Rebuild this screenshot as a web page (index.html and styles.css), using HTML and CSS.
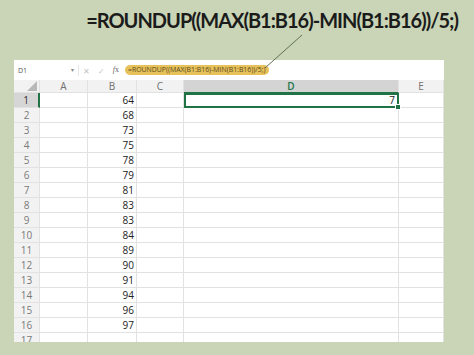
FILE: index.html
```html
<!DOCTYPE html>
<html lang="en">
<head>
    <meta charset="UTF-8">
    <meta name="viewport" content="width=device-width, initial-scale=1.0">
    <title>ROUNDUP</title>
    <link rel="stylesheet" href="styles.css">
</head>
<body>
    <h1 class="headline">=ROUNDUP((MAX(B1:B16)-MIN(B1:B16))/5;)</h1>

    <div class="sheet">
        <div class="fbar">
            <div class="namebox"><span>D1</span><span class="caret">&#9662;</span></div>
            <div class="fbtns">
                <span>&#10005;</span>
                <span>&#10003;</span>
                <span class="fx"><i>f</i>x</span>
            </div>
            <div class="formula"><span class="pill">=ROUNDUP((MAX(B1:B16)-MIN(B1:B16))/5;)</span></div>
        </div>

        <div class="grid" id="grid">
            <div class="corner"><span class="tri"></span></div>
            <div class="colhead">A</div>
            <div class="colhead">B</div>
            <div class="colhead">C</div>
            <div class="colhead active">D</div>
            <div class="colhead">E</div>
        </div>
    </div>

    <!-- leader line from the headline down to the formula -->
    <svg class="leader" width="474" height="355" viewBox="0 0 474 355">
        <line x1="302" y1="35" x2="265" y2="68" stroke="#5f6f55" stroke-width="1"/>
    </svg>

    <script>
        var grid=document.getElementById('grid');
        var values=[64,68,73,75,78,79,81,83,83,84,89,90,91,94,96,97,''];

        for(var r=0;r<values.length;r++){
            var row=r+1;
            var cells=[
                ['rowhead'+(row==1?' active':''), row],
                ['cell',''],
                ['cell num', values[r]],
                ['cell',''],
                ['cell num'+(row==1?' selected':''), row==1?7:''],
                ['cell','']
            ];
            for(var c=0;c<cells.length;c++){
                var d=document.createElement('div');
                d.className=cells[c][0];
                d.textContent=cells[c][1];
                grid.appendChild(d);
            }
        }
    </script>
</body>
</html>
```

FILE: styles.css
```css
*{
    margin: 0;
    padding: 0;
    box-sizing: border-box;
}
body{
    width: 474px;
    height: 355px;
    background: #c9d5b6;
    font-family: "Open Sans", "Noto Sans", sans-serif;
    overflow: hidden;
    position: relative;
}
.headline{
    height: 60px;
    padding: 8px 16px 0 0;
    text-align: right;
    font-family: "Lato", "Liberation Sans", sans-serif;
    font-weight: 700;
    font-size: 20px;
    letter-spacing: -1px;
    color: #1b1b1b;
}
.sheet{
    margin-left: 14px;
    width: 430px;
    height: 282px;
    background: #ffffff;
    overflow: hidden;
}
/* formula bar */
.fbar{
    height: 20px;
    display: flex;
    align-items: center;
    font-size: 7px;
    color: #555555;
}
.namebox{
    width: 64px;
    padding: 0 4px;
    display: flex;
    justify-content: space-between;
}
.caret{
    color: #888888;
    font-size: 6px;
}
.fbtns{
    width: 45px;
    display: flex;
    justify-content: space-around;
    color: #c4c4c4;
    font-size: 8px;
    border-left: 1px solid #e6e6e6;
}
.fbtns .fx{
    color: #666666;
    font-family: "Liberation Serif", serif;
}
.formula{
    flex: 1;
    padding-left: 2px;
}
.pill{
    display: inline-block;
    height: 10px;
    line-height: 10px;
    padding: 0 3px;
    border-radius: 5px;
    background: #e7c15a;
    color: #5a4a1c;
    font-size: 6.9px;
    white-space: nowrap;
}
/* grid */
.grid{
    display: grid;
    grid-template-columns: 26px 48px 49px 47px 215px 45px;
    grid-template-rows: 13px;
    grid-auto-rows: 15px;
    font-size: 10px;
}
.grid > div{
    border-right: 1px solid #e2e2e2;
    border-bottom: 1px solid #e2e2e2;
}
.corner{
    background: #f2f2f2;
    position: relative;
}
.tri{
    position: absolute;
    right: 2px;
    bottom: 1px;
    width: 0;
    height: 0;
    border-left: 10px solid transparent;
    border-bottom: 10px solid #b8b8b8;
}
.colhead{
    background: #f2f2f2;
    color: #707070;
    text-align: center;
    line-height: 12px;
}
.colhead.active{
    background: #d4d4d4;
    color: #217346;
    font-weight: 600;
    border-bottom: 1px solid #217346 !important;
}
.rowhead{
    background: #f2f2f2;
    color: #7a7a7a;
    text-align: center;
    line-height: 14px;
}
.rowhead.active{
    background: #d6d6d6;
    color: #333333;
    border-right: 2px solid #217346 !important;
}
.cell{
    color: #222222;
    line-height: 15px;
}
.num{
    text-align: right;
    padding-right: 2px;
}
.selected{
    position: relative;
    border: 2px solid #217346 !important;
    line-height: 11px;
    padding-right: 2px;
}
.selected::after{
    content: '';
    position: absolute;
    right: -4px;
    bottom: -4px;
    width: 4px;
    height: 4px;
    background: #217346;
    border: 1px solid #ffffff;
}
.leader{
    position: absolute;
    top: 0;
    left: 0;
    pointer-events: none;
}
```
